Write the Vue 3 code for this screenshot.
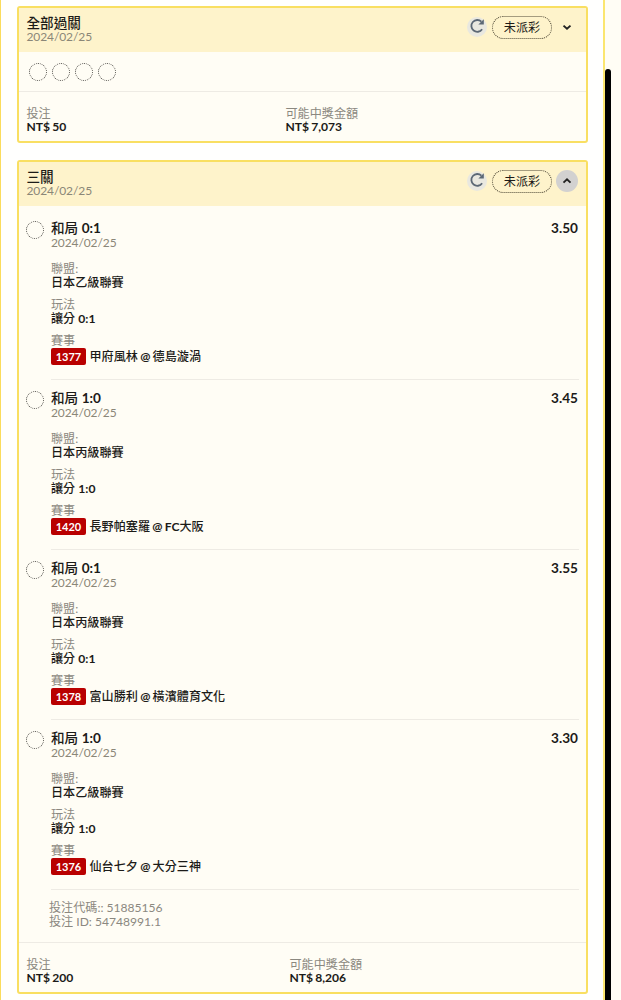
<template>
  <div class="page">
    <main class="bet-panel">
      <section v-for="bet in bets" :key="bet.title" class="bet-card">
        <header class="card-header">
          <div class="card-heading">
            <div class="card-title">{{ bet.title }}</div>
            <div class="date">{{ bet.date }}</div>
          </div>
          <div class="card-actions">
            <button class="refresh-btn" aria-label="重新整理">
              <svg viewBox="0 0 16 16" width="16" height="16">
                <path d="M13.1 11.3A5.9 5.9 0 1 1 12.4 3.7" fill="none" stroke="#5c6875" stroke-width="1.8" />
                <path d="M14.8 1.2V6.4H9.4Z" fill="#5c6875" />
              </svg>
            </button>
            <span class="status-tag">{{ bet.status }}</span>
            <button class="toggle-btn" :class="{ open: bet.open }" aria-label="展開" @click="bet.open = !bet.open">
              <svg viewBox="0 0 10 10" width="10" height="10">
                <path :d="bet.open ? 'M1.5 6.6L5 3.3L8.5 6.6' : 'M1.5 3.6L5 6.8L8.5 3.6'" fill="none" stroke="#222" stroke-width="1.9" />
              </svg>
            </button>
          </div>
        </header>

        <div v-if="!bet.open" class="dot-row">
          <span v-for="n in bet.legCount" :key="n" class="dot"></span>
        </div>

        <div v-else class="leg-list">
          <article v-for="leg in bet.legs" :key="leg.code" class="leg">
            <span class="dot"></span>
            <div class="leg-body">
              <div class="leg-top">
                <span class="leg-title">和局 <b>{{ leg.score }}</b></span>
                <span class="odds">{{ leg.odds }}</span>
              </div>
              <div class="date">{{ bet.date }}</div>
              <div class="fields">
                <div class="field">
                  <div class="label">聯盟:</div>
                  <div class="value">{{ leg.league }}</div>
                </div>
                <div class="field">
                  <div class="label">玩法</div>
                  <div class="value">讓分 <b>{{ leg.score }}</b></div>
                </div>
                <div class="field">
                  <div class="label">賽事</div>
                  <div class="match">
                    <span class="match-code">{{ leg.code }}</span>
                    <span class="match-name">{{ leg.home }} <b>@</b> <b>{{ leg.prefix }}</b>{{ leg.away }}</span>
                  </div>
                </div>
              </div>
            </div>
          </article>
          <div class="bet-ids">
            <div>投注代碼:: {{ bet.code }}</div>
            <div>投注 ID: {{ bet.id }}</div>
          </div>
        </div>

        <footer class="card-footer" :class="{ expanded: bet.open }">
          <div class="amount">
            <div class="label">投注</div>
            <div class="money">NT$ {{ bet.stake }}</div>
          </div>
          <div class="amount">
            <div class="label">可能中獎金額</div>
            <div class="money">NT$ {{ bet.payout }}</div>
          </div>
        </footer>
      </section>
    </main>
    <div class="scroll-track">
      <div class="scroll-thumb"></div>
    </div>
  </div>
</template>

<script setup>
import { ref } from 'vue'

const bets = ref([
  {
    title: '全部過關',
    date: '2024/02/25',
    status: '未派彩',
    open: false,
    legCount: 4,
    legs: [],
    stake: '50',
    payout: '7,073',
  },
  {
    title: '三關',
    date: '2024/02/25',
    status: '未派彩',
    open: true,
    legCount: 4,
    legs: [
      { score: '0:1', odds: '3.50', league: '日本乙級聯賽', code: '1377', home: '甲府風林', prefix: '', away: '德島漩渦' },
      { score: '1:0', odds: '3.45', league: '日本丙級聯賽', code: '1420', home: '長野帕塞羅', prefix: 'FC', away: '大阪' },
      { score: '0:1', odds: '3.55', league: '日本丙級聯賽', code: '1378', home: '富山勝利', prefix: '', away: '橫濱體育文化' },
      { score: '1:0', odds: '3.30', league: '日本乙級聯賽', code: '1376', home: '仙台七夕', prefix: '', away: '大分三神' },
    ],
    code: '51885156',
    id: '54748991.1',
    stake: '200',
    payout: '8,206',
  },
])
</script>

<style>
body {
  margin: 0;
  background: #fffdf5;
}
</style>

<style scoped>
.page {
  display: flex;
  height: 1000px;
  overflow: hidden;
  background: #fffdf5;
  color: #1c1b18;
  font-family: Lato, "Noto Sans CJK TC", sans-serif;
  font-size: 12.1px;
  line-height: 14px;
}

.bet-panel {
  box-sizing: border-box;
  width: 605px;
  flex: none;
  display: flex;
  flex-direction: column;
  gap: 17px;
  padding: 6px 15px 0 16px;
  background: #fffffe;
  border-left: 1px solid #fbdc5c;
  border-right: 2px solid #fbe670;
}

.bet-card {
  flex: none;
  background: #fffdf5;
  border: 2px solid #f9df62;
  border-radius: 3px;
}

.card-header {
  box-sizing: border-box;
  height: 44px;
  display: flex;
  justify-content: space-between;
  padding: 6px 8px 0 7.5px;
  background: #fef3cb;
}

.card-title {
  height: 16px;
  font-size: 13.6px;
  font-weight: 500;
  line-height: 18px;
}

.date {
  height: 14px;
  color: #8b8778;
  font-size: 12px;
  letter-spacing: -0.1px;
}

.card-actions {
  display: flex;
  align-items: center;
  height: 26px;
}

button {
  display: flex;
  align-items: center;
  justify-content: center;
  padding: 0;
  border: 0;
  background: none;
  cursor: pointer;
}

.refresh-btn {
  width: 20px;
  height: 20px;
  margin-right: 5px;
  border-radius: 50%;
  background: #e9e8e0;
}

.refresh-btn svg {
  margin-top: -2px;
}

.status-tag {
  box-sizing: border-box;
  width: 60px;
  height: 23px;
  margin-right: 4px;
  border: 1px dotted #4c4634;
  border-radius: 12px;
  line-height: 21px;
  text-align: center;
}

.toggle-btn {
  width: 22px;
  height: 22px;
  border-radius: 50%;
}

.toggle-btn.open {
  background: #d2d1d0;
}

.dot-row {
  display: flex;
  gap: 5px;
  height: 28px;
  padding: 11px 10px 0;
}

.dot {
  box-sizing: border-box;
  flex: none;
  width: 18px;
  height: 18px;
  border: 1px dotted #4a4844;
  border-radius: 50%;
}

.leg-list {
  padding: 4px 7px 0 7px;
}

.leg {
  display: flex;
  height: 170px;
}

.leg .dot {
  margin: 11px 7px 0 0;
}

.leg-body {
  box-sizing: border-box;
  flex: 1;
  padding-top: 9px;
  border-bottom: 1px solid #eeebe4;
}

.leg-top {
  display: flex;
  justify-content: space-between;
  height: 17px;
  padding-right: 1px;
  font-size: 13.6px;
  font-weight: 500;
  line-height: 18px;
}

b,
.odds {
  font-weight: 700;
}

.fields {
  display: flex;
  flex-direction: column;
  gap: 8px;
  padding-top: 12px;
}

.label {
  color: #8b8880;
}

.value,
.match-name {
  font-weight: 500;
}

.match-name {
  word-spacing: -0.8px;
}

.match {
  display: flex;
  align-items: center;
  gap: 3.5px;
}

.match-code {
  width: 35px;
  height: 17px;
  border-radius: 2px;
  background: #b90000;
  color: #fff;
  font-size: 11px;
  font-weight: 700;
  line-height: 17px;
  text-align: center;
}

.bet-ids {
  height: 41px;
  padding: 11px 0 0 23px;
  color: #8b8880;
}

.card-footer {
  box-sizing: border-box;
  display: grid;
  grid-template-columns: 259px 1fr;
  height: 50px;
  padding: 15px 8px 0 7.5px;
  border-top: 1px solid #eeebe4;
}

.card-footer.expanded {
  grid-template-columns: 263px 1fr;
}

.amount .label,
.money {
  height: 13px;
}

.money {
  font-weight: 700;
  word-spacing: -0.8px;
}

.scroll-track {
  flex: none;
  width: 6px;
  padding-top: 69px;
}

.scroll-thumb {
  height: 940px;
  border-radius: 3px 3px 0 0;
  background: #000;
}
</style>
